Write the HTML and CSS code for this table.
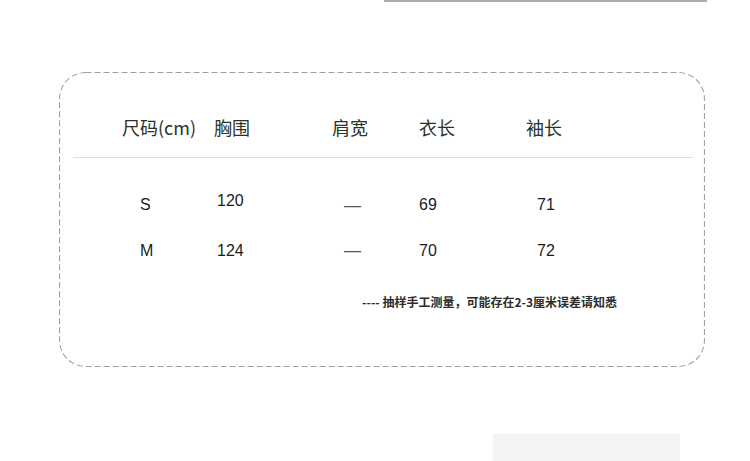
FILE: index.html
```html
<!DOCTYPE html>
<html lang="zh">
<head>
<meta charset="utf-8">
<title>尺码表</title>
<link rel="stylesheet" href="styles.css">
</head>
<body>
<div class="topbar"></div>
<div class="card">
  <div class="row head">
    <div class="c c1">尺码(cm)</div>
    <div class="c c2">胸围</div>
    <div class="c c3">肩宽</div>
    <div class="c c4">衣长</div>
    <div class="c c5">袖长</div>
  </div>
  <div class="rule"></div>
  <div class="row data first">
    <div class="c c1 d">S</div>
    <div class="c c2 d up">120</div>
    <div class="c c3 d dash low">—</div>
    <div class="c c4 d">69</div>
    <div class="c c5 d">71</div>
  </div>
  <div class="row data">
    <div class="c c1 d">M</div>
    <div class="c c2 d">124</div>
    <div class="c c3 d dash">—</div>
    <div class="c c4 d">70</div>
    <div class="c c5 d">72</div>
  </div>
  <p class="note">---- 抽样手工测量，可能存在2-3厘米误差请知悉</p>
</div>
<div class="footbox"></div>
</body>
</html>
```

FILE: styles.css
```css
html, body {
  margin: 0;
  padding: 0;
  background: #ffffff;
}

body {
  width: 750px;
  height: 461px;
  overflow: hidden;
  font-family: "Liberation Sans", "Noto Sans CJK SC", sans-serif;
}

.topbar {
  margin-left: 384px;
  width: 323px;
  height: 2px;
  background: #acacac;
}

.card {
  box-sizing: border-box;
  margin: 70px 0 0 59px;
  width: 646px;
  height: 295px;
  border-radius: 26px;
  padding-top: 43px;
  background-image: url("data:image/svg+xml;utf8,<svg xmlns='http://www.w3.org/2000/svg' width='646' height='295'><rect x='0.5' y='0.5' width='645' height='294' rx='26' ry='26' fill='none' stroke='%23a0a0a0' stroke-width='1.2' stroke-dasharray='6 3'/></svg>");
  background-repeat: no-repeat;
}

.row {
  display: grid;
  grid-template-columns: 92px 118px 87px 107px 1fr;
  padding-left: 63px;
  height: 24px;
  line-height: 24px;
  align-items: center;
}

.head .c {
  font-family: "Noto Sans CJK SC", sans-serif;
  font-size: 18px;
  color: #2a332a;
}

.rule {
  margin: 18px 12px 0 14px;
  height: 1px;
  background: #dedede;
}

.data.first {
  margin-top: 35px;
}

.data + .data {
  margin-top: 22px;
}

.d {
  font-size: 16px;
  color: #1c1c1c;
}

.d.c1 { padding-left: 18px; }
.d.c2 { padding-left: 3px; }
.d.c3 { padding-left: 12px; }
.d.c5 { padding-left: 11px; }

.up { position: relative; top: -4px; }
.low { position: relative; top: 1px; }

.dash {
  color: #555555;
  font-size: 17px;
}

.note {
  margin: 31px 0 0 303px;
  font-family: "Noto Sans CJK SC", sans-serif;
  font-size: 12px;
  font-weight: 700;
  line-height: 16px;
  color: #2c2c2c;
}

.footbox {
  margin: 67px 0 0 493px;
  width: 187px;
  height: 28px;
  background: #f4f4f4;
}
```
